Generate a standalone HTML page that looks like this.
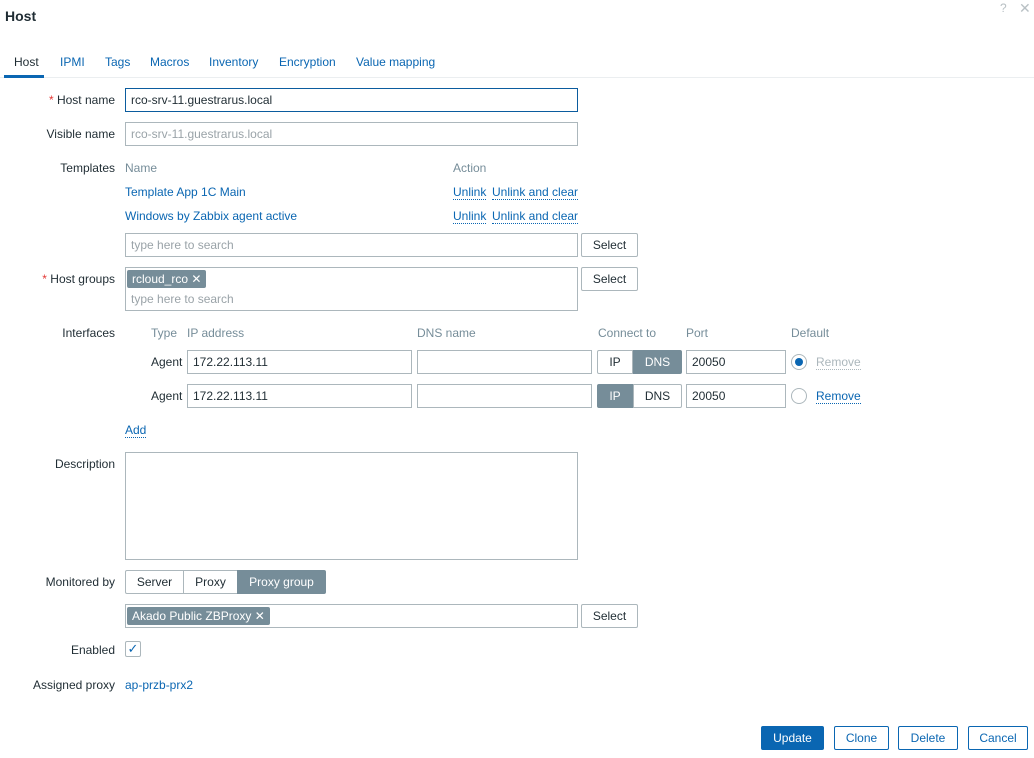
<!DOCTYPE html>
<html><head><style>
*{box-sizing:border-box;margin:0;padding:0}
body{width:1034px;height:758px;background:#fff;font-family:"Liberation Sans",Arial,sans-serif;font-size:12px;color:#1f2c33;position:relative;overflow:hidden}
.a{position:absolute;white-space:nowrap}
.lbl{position:absolute;right:919px;white-space:nowrap}
.req:before{content:"* ";color:#e33734}
.inp{position:absolute;border:1px solid #acb7bc;height:24px;background:#fff;padding:0 5px;line-height:22px}
.ph{color:#9aa3a8}
.btn{position:absolute;border:1px solid #acb7bc;height:24px;line-height:22px;text-align:center;background:#fff;border-radius:2px}
.lnk{color:#0a66b2}
.dot{border-bottom:1px dotted #0a66b2}
.hd{color:#768d99}
.tag{position:absolute;background:#768d99;color:#fff;height:18px;line-height:18px;padding:0 5px;border-radius:2px}
.sel{background:#768d99;color:#fff}
.bb{position:absolute;height:24px;line-height:22px;text-align:center;border:1px solid #0a66b2;color:#0a66b2;border-radius:2px;background:#fff}
</style></head><body>
<div class="a" style="left:5px;top:8px;font-size:14px;font-weight:bold;color:#1f2c33">Host</div>
<div class="a" style="left:1000px;top:1px;color:#b8c0c4;font-size:12px">?</div>
<div class="a" style="left:1019px;top:0px;color:#b8c0c4;font-size:14px">✕</div>

<div class="a" style="left:0;top:77px;width:1034px;height:1px;background:#ebeef0"></div>
<div class="a" style="left:4px;top:75px;width:40px;height:3px;background:#0a66b2"></div>
<div class="a" style="left:14px;top:55px">Host</div>
<div class="a lnk" style="left:60px;top:55px">IPMI</div>
<div class="a lnk" style="left:105px;top:55px">Tags</div>
<div class="a lnk" style="left:150px;top:55px">Macros</div>
<div class="a lnk" style="left:209px;top:55px">Inventory</div>
<div class="a lnk" style="left:279px;top:55px">Encryption</div>
<div class="a lnk" style="left:356px;top:55px">Value mapping</div>

<div class="lbl req" style="top:93px">Host name</div>
<div class="inp" style="left:125px;top:88px;width:453px;border-color:#0b5c9e">rco-srv-11.guestrarus.local</div>
<div class="lbl" style="top:127px">Visible name</div>
<div class="inp ph" style="left:125px;top:122px;width:453px">rco-srv-11.guestrarus.local</div>

<div class="lbl" style="top:161px">Templates</div>
<div class="a hd" style="left:125px;top:161px">Name</div>
<div class="a hd" style="left:453px;top:161px">Action</div>
<div class="a lnk" style="left:125px;top:185px">Template App 1C Main</div>
<div class="a lnk dot" style="left:453px;top:185px">Unlink</div>
<div class="a lnk dot" style="left:492px;top:185px">Unlink and clear</div>
<div class="a lnk" style="left:125px;top:209px">Windows by Zabbix agent active</div>
<div class="a lnk dot" style="left:453px;top:209px">Unlink</div>
<div class="a lnk dot" style="left:492px;top:209px">Unlink and clear</div>
<div class="inp ph" style="left:125px;top:233px;width:453px">type here to search</div>
<div class="btn" style="left:581px;top:233px;width:57px">Select</div>

<div class="lbl req" style="top:272px">Host groups</div>
<div class="inp" style="left:125px;top:267px;width:453px;height:44px"></div>
<div class="tag" style="left:127px;top:270px">rcloud_rco ✕</div>
<div class="a ph" style="left:131px;top:292px">type here to search</div>
<div class="btn" style="left:581px;top:267px;width:57px">Select</div>

<div class="lbl" style="top:326px">Interfaces</div>
<div class="a hd" style="left:151px;top:326px">Type</div>
<div class="a hd" style="left:187px;top:326px">IP address</div>
<div class="a hd" style="left:417px;top:326px">DNS name</div>
<div class="a hd" style="left:598px;top:326px">Connect to</div>
<div class="a hd" style="left:686px;top:326px">Port</div>
<div class="a hd" style="left:791px;top:326px">Default</div>

<div class="a" style="left:151px;top:355px">Agent</div>
<div class="inp" style="left:187px;top:350px;width:225px">172.22.113.11</div>
<div class="inp" style="left:417px;top:350px;width:175px"></div>
<div class="btn" style="left:597px;top:350px;width:36px;border-radius:2px 0 0 2px">IP</div>
<div class="btn sel" style="left:633px;top:350px;width:49px;border-color:#768d99;border-radius:0 2px 2px 0">DNS</div>
<div class="inp" style="left:686px;top:350px;width:100px">20050</div>
<div class="a" style="left:791px;top:354px;width:16px;height:16px;border:1px solid #acb7bc;border-radius:50%"><div style="position:absolute;left:3px;top:3px;width:8px;height:8px;border-radius:50%;background:#0a66b2"></div></div>
<div class="a" style="left:816px;top:355px;color:#acb7bc;border-bottom:1px dotted #acb7bc">Remove</div>

<div class="a" style="left:151px;top:389px">Agent</div>
<div class="inp" style="left:187px;top:384px;width:225px">172.22.113.11</div>
<div class="inp" style="left:417px;top:384px;width:175px"></div>
<div class="btn sel" style="left:597px;top:384px;width:36px;border-color:#768d99;border-radius:2px 0 0 2px">IP</div>
<div class="btn" style="left:633px;top:384px;width:49px;border-radius:0 2px 2px 0">DNS</div>
<div class="inp" style="left:686px;top:384px;width:100px">20050</div>
<div class="a" style="left:791px;top:388px;width:16px;height:16px;border:1px solid #acb7bc;border-radius:50%"></div>
<div class="a lnk dot" style="left:816px;top:389px">Remove</div>

<div class="a lnk dot" style="left:125px;top:423px">Add</div>

<div class="lbl" style="top:457px">Description</div>
<div class="inp" style="left:125px;top:452px;width:453px;height:108px"></div>

<div class="lbl" style="top:575px">Monitored by</div>
<div class="btn" style="left:125px;top:570px;width:59px;border-radius:2px 0 0 2px">Server</div>
<div class="btn" style="left:183px;top:570px;width:55px;border-radius:0">Proxy</div>
<div class="btn sel" style="left:237px;top:570px;width:89px;border-color:#768d99;border-radius:0 2px 2px 0">Proxy group</div>

<div class="inp" style="left:125px;top:604px;width:453px"></div>
<div class="tag" style="left:127px;top:607px">Akado Public ZBProxy ✕</div>
<div class="btn" style="left:581px;top:604px;width:57px">Select</div>

<div class="lbl" style="top:643px">Enabled</div>
<div class="a" style="left:125px;top:641px;width:16px;height:16px;border:1px solid #acb7bc;border-radius:2px;color:#0a66b2;font-size:13px;line-height:14px;text-align:center">✓</div>

<div class="lbl" style="top:678px">Assigned proxy</div>
<div class="a lnk" style="left:125px;top:678px">ap-przb-prx2</div>

<div class="bb" style="left:761px;top:726px;width:63px;background:#0a66b2;color:#fff">Update</div>
<div class="bb" style="left:834px;top:726px;width:55px">Clone</div>
<div class="bb" style="left:898px;top:726px;width:60px">Delete</div>
<div class="bb" style="left:968px;top:726px;width:60px">Cancel</div>
</body></html>
